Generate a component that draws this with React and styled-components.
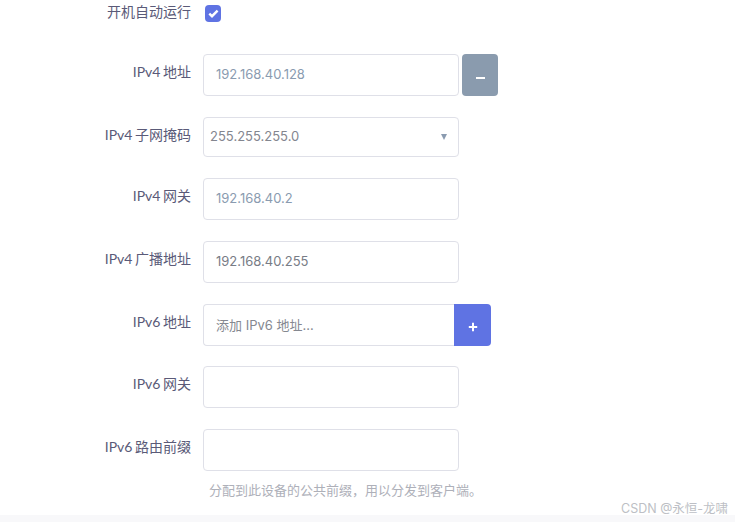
import styled, { createGlobalStyle } from "styled-components";

const GlobalStyle = createGlobalStyle`
  html, body {
    margin: 0;
    padding: 0;
    background: #fff;
    overflow: hidden;
  }
  body {
    font-family: Inter, "Noto Sans CJK SC", sans-serif;
  }
`;

const Page = styled.div`
  position: relative;
  width: 735px;
  height: 522px;
  overflow: hidden;
  display: flex;
  flex-direction: column;
`;

const Form = styled.div`
  flex: 1;
  display: flex;
  flex-direction: column;
  gap: 21px;
`;

const Row = styled.div`
  display: flex;
  align-items: flex-start;
  height: ${(p) => p.$height || 42}px;
  margin-top: ${(p) => p.$shift || 0}px;
`;

const CheckRow = styled.div`
  display: flex;
  align-items: center;
  height: 27px;
  margin-bottom: 6px;
`;

const Label = styled.label`
  width: 191px;
  flex: none;
  margin-right: 12px;
  text-align: right;
  font-family: Lato, "Noto Sans CJK SC", sans-serif;
  font-size: 14px;
  line-height: 20px;
  word-spacing: -1px;
  padding-top: ${(p) => p.$top ?? 8}px;
  color: #5a5a78;
`;

const CheckLabel = styled(Label)`
  padding-top: 0;
  margin-top: -3px;
  margin-right: 14px;
`;

const Check = styled.span`
  width: 16px;
  height: 17px;
  border-radius: 4px;
  background: #5f73e3;
  display: flex;
  align-items: center;
  justify-content: center;
`;

const Field = styled.div`
  width: 256px;
  height: 42px;
  box-sizing: border-box;
  border: 1px solid #dfe0e8;
  border-radius: 4px;
  background: #fff;
  padding: 0 12px 2px;
  display: flex;
  align-items: center;
  font-size: 13px;
  color: ${(p) => p.$color || "#787c86"};
`;

const AddField = styled(Field)`
  width: 251px;
  border-right: none;
  border-radius: 4px 0 0 4px;
  color: #858890;
`;

const SelectBox = styled(Field)`
  height: 40px;
  padding: 0 11px 2px 6px;
  justify-content: space-between;
  color: #83868f;
`;

const Arrow = styled.span`
  width: 0;
  height: 0;
  border-left: 3.5px solid transparent;
  border-right: 3.5px solid transparent;
  border-top: 6px solid #8a9bb0;
  margin: 2px 0 0;
`;

const IconButton = styled.button`
  width: ${(p) => p.$width}px;
  height: 42px;
  flex: none;
  border: none;
  padding: 0;
  margin-left: ${(p) => p.$gap || 0}px;
  background: ${(p) => p.$bg};
  border-radius: ${(p) => p.$radius};
  color: #fff;
  display: flex;
  align-items: center;
  justify-content: center;
`;

const Dash = styled.span`
  width: 9px;
  height: 2px;
  margin-top: 5px;
  background: #fff;
`;

const Hint = styled.div`
  margin: -11px 0 0 209px;
  font-size: 13px;
  line-height: 18px;
  color: #aeb0b9;
`;

const FooterStrip = styled.div`
  height: 7px;
  flex: none;
  background: #f8f8fa;
`;

const Watermark = styled.div`
  position: absolute;
  right: 7px;
  bottom: 5px;
  font-size: 12.5px;
  line-height: 16px;
  color: #bdbfc5;
`;

const App = () => {
  return (
    <Page>
      <GlobalStyle />
      <Form>
        <CheckRow>
          <CheckLabel>开机自动运行</CheckLabel>
          <Check>
            <svg width="11" height="9" viewBox="0 0 11 9" fill="none">
              <path d="M1.3 4.6 4 7.2 9.6 1.6" stroke="#fff" strokeWidth="2.4" />
            </svg>
          </Check>
        </CheckRow>
        <Row>
          <Label>IPv4 地址</Label>
          <Field $color="#8a9bb0">192.168.40.128</Field>
          <IconButton $width={36} $gap={3} $bg="#8a9bae" $radius="4px">
            <Dash />
          </IconButton>
        </Row>
        <Row $height={40}>
          <Label>IPv4 子网掩码</Label>
          <SelectBox>
            255.255.255.0
            <Arrow />
          </SelectBox>
        </Row>
        <Row>
          <Label>IPv4 网关</Label>
          <Field $color="#8a9bb0">192.168.40.2</Field>
        </Row>
        <Row>
          <Label>IPv4 广播地址</Label>
          <Field>192.168.40.255</Field>
        </Row>
        <Row>
          <Label>IPv6 地址</Label>
          <AddField>添加 IPv6 地址...</AddField>
          <IconButton $width={37} $bg="#5f73e3" $radius="0 4px 4px 0">
            <svg width="10" height="10" viewBox="0 0 10 10" style={{ marginTop: 3 }}>
              <path d="M5 .8v8.4M.8 5h8.4" stroke="#fff" strokeWidth="2" />
            </svg>
          </IconButton>
        </Row>
        <Row $shift={-1}>
          <Label>IPv6 网关</Label>
          <Field />
        </Row>
        <Row>
          <Label>IPv6 路由前缀</Label>
          <Field />
        </Row>
        <Hint>分配到此设备的公共前缀，用以分发到客户端。</Hint>
      </Form>
      <FooterStrip />
      <Watermark>CSDN @永恒-龙啸</Watermark>
    </Page>
  );
};

export default App;
